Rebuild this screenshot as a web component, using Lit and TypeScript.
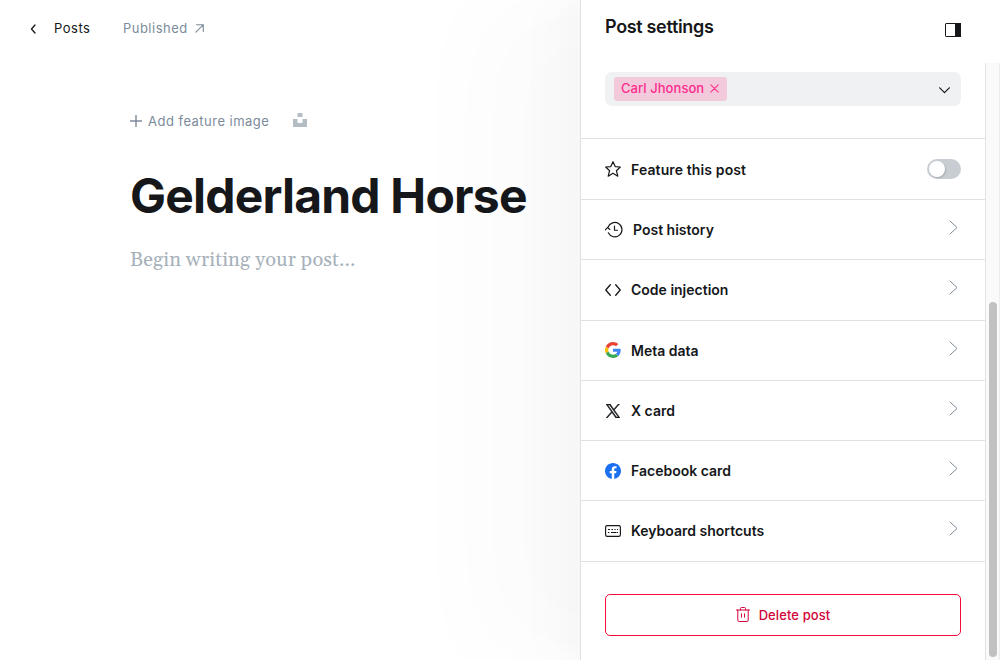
import { LitElement, html, css, svg } from "lit";
import { customElement, property } from "lit/decorators.js";

const stroke = (body: unknown, w = 16, h = 16, vb = "0 0 24 24", sw = 1.5) => html`
  <svg width=${w} height=${h} viewBox=${vb} fill="none" stroke="currentColor" stroke-width=${sw}
    stroke-linecap="round" stroke-linejoin="round">${body}</svg>`;

const icons: Record<string, () => unknown> = {
  star: () => stroke(svg`<path d="M8 .7l2.200 4.900 5.100.4-3.900 3.700 1.400 5.500L8 12.300l-4.800 2.900 1.400-5.500L.7 6l5.100-.4z"/>`, 18, 18, "-1 -1 18 18", 1.2),
  history: () => stroke(svg`<path d="M4 6.300A7.200 7.200 0 1 1 4.300 11.800M1.400 8.900l2-2.400 2.500 2M10.500 5v4.200h3"/>`, 20, 18, "0 0 20 18", 1.15),
  code: () => stroke(svg`<path d="M5.300 2.800L.8 8l4.500 5.200M10.700 2.800L15.200 8l-4.500 5.200"/>`, 16, 16, "0 0 16 16", 1.3),
  google: () => html`<svg width="16" height="16" viewBox="0 0 48 48">
    <path fill="#EA4335" d="M24 9.500c3.540 0 6.710 1.220 9.210 3.600l6.850-6.850C35.900 2.380 30.470 0 24 0 14.620 0 6.510 5.380 2.560 13.220l7.980 6.190C12.430 13.720 17.740 9.500 24 9.500z"/>
    <path fill="#4285F4" d="M46.980 24.550c0-1.570-.15-3.090-.38-4.550H24v9.020h12.940c-.58 2.960-2.260 5.480-4.780 7.180l7.730 6c4.510-4.180 7.090-10.360 7.090-17.650z"/>
    <path fill="#FBBC05" d="M10.530 28.590c-.48-1.450-.76-2.990-.76-4.590s.27-3.140.76-4.590l-7.980-6.190C.92 16.460 0 20.120 0 24c0 3.880.92 7.540 2.560 10.780l7.970-6.190z"/>
    <path fill="#34A853" d="M24 48c6.480 0 11.930-2.130 15.890-5.810l-7.730-6c-2.150 1.450-4.920 2.300-8.160 2.300-6.260 0-11.570-4.220-13.470-9.910l-7.980 6.190C6.510 42.620 14.620 48 24 48z"/>
  </svg>`,
  x: () => html`<svg width="14" height="14" viewBox="0 0 1200 1227" preserveAspectRatio="none"><path fill="#15171a" stroke="#15171a" stroke-width="50"
    d="M714.163 519.284L1160.890 0H1055.030L667.137 450.887L357.328 0H0L468.492 681.821L0 1226.370H105.866L515.491 750.218L842.672 1226.370H1200L714.137 519.284H714.163ZM569.165 687.828L521.697 619.934L144.011 79.694H306.615L611.412 515.685L658.880 583.579L1055.080 1150.300H892.476L569.165 687.854V687.828Z"/></svg>`,
  facebook: () => html`<svg width="16" height="16" viewBox="0 0 24 24"><path fill="#1b6ff0"
    d="M24 12.073c0-6.627-5.373-12-12-12s-12 5.373-12 12c0 5.990 4.388 10.954 10.125 11.854v-8.385H7.078v-3.470h3.047V9.430c0-3.007 1.792-4.669 4.533-4.669 1.312 0 2.686.235 2.686.235v2.953H15.830c-1.491 0-1.956.925-1.956 1.874v2.250h3.328l-.532 3.470h-2.796v8.385C19.612 23.027 24 18.062 24 12.073z"/></svg>`,
  keyboard: () => html`<svg width="16" height="16" viewBox="0 0 16 16" fill="none" stroke="#15171a">
    <rect x=".6" y="2.600" width="14.800" height="10.800" rx="1.600" stroke-width="1.150"/>
    <path d="M3 6.500h2M6.500 6.500h1.500M9.500 6.500h1.200M12 6.500h1M3 9.500h1.300M6 9.500h5.500M12 9.500h1" stroke-width="1"/></svg>`,
};

@customElement("settings-row")
export class SettingsRow extends LitElement {
  @property() label = "";
  @property() icon = "";
  @property({ type: Boolean, reflect: true }) toggle = false;

  static styles = css`
    :host { display: flex; align-items: center; box-sizing: border-box; height: 60px; padding: 1px 24px 0; border-top: 1px solid #dfe1e3; }
    :host([toggle]) { height: 61px; }
    .icon { display: flex; align-items: center; justify-content: center; width: 16px; height: 16px; margin-right: 10px; flex: none; }
    .icon.history { width: 18px; }
    .icon.star, .icon.google { margin-bottom: 2px; }
    .label { flex: 1; font-size: 14px; font-weight: 600; line-height: 20px; }
    :host([toggle]) .label { letter-spacing: .12px; }
    .chevron { display: flex; margin: 0 3px 5px 0; color: #7c8b9a; }
    .switch { box-sizing: border-box; width: 34px; height: 20px; padding: 2px; border-radius: 10px; background: #c8cdd4; margin-bottom: 1px; }
    .knob { width: 16px; height: 16px; border-radius: 50%; background: #fff; box-shadow: 1px 1px 2px rgba(0, 0, 0, .16); }
    svg { display: block; flex: none; }
  `;

  render() {
    return html`
      <span class="icon ${this.icon}">${icons[this.icon]?.()}</span>
      <span class="label">${this.label}</span>
      ${this.toggle
        ? html`<span class="switch"><div class="knob"></div></span>`
        : html`<span class="chevron">${stroke(svg`<path d="M1 1l7 6.500-7 6.500"/>`, 9, 15, "0 0 9 15", 1)}</span>`}
    `;
  }
}

@customElement("app-root")
export class AppRoot extends LitElement {
  static styles = css`
    :host { display: flex; width: 1000px; height: 660px; overflow: hidden; background: #fff; color: #15171a;
      font-family: Inter, "Liberation Sans", sans-serif; font-size: 14px; }
    svg { display: block; flex: none; }
    .editor { width: 580px; flex: none; }
    .bar { display: flex; align-items: center; height: 56px; padding-left: 29px; font-size: 13px; letter-spacing: .5px; }
    .bar svg { margin-top: 1px; }
    .back { display: flex; align-items: center; gap: 17px; color: #15171a; }
    .status { display: flex; align-items: center; gap: 7px; margin-left: 32.5px; color: #7c8b9a; }
    .canvas { padding: 54px 0 0 130px; }
    .feature { display: flex; align-items: center; height: 22px; color: #7c8b9a; font-size: 13px; letter-spacing: .48px; }
    .add { display: flex; align-items: center; gap: 6px; }
    .unsplash { margin: -3px 0 0 24px; }
    h1 { margin: 34px 0 0; font-size: 48px; line-height: 60px; font-weight: 700; letter-spacing: -.8px; white-space: nowrap; }
    .placeholder { margin: 18px 0 0; color: #a6b1ba; font: 20px/32px Georgia, Gelasio, "Source Serif Pro", "Noto Serif", "Liberation Serif", serif; letter-spacing: .1px; white-space: nowrap; }
    .panel { position: relative; box-sizing: border-box; display: flex; flex-direction: column; width: 420px; height: 660px;
      background: #fff; border-left: 1px solid #dfe1e3;
      box-shadow: -2.8px 0 2.2px rgba(0, 0, 0, .003), -6.7px 0 5.3px rgba(0, 0, 0, .004), -12.5px 0 10px rgba(0, 0, 0, .006),
        -22.3px 0 17.9px rgba(0, 0, 0, .008), -41.8px 0 33.4px rgba(0, 0, 0, .01), -100px 0 100px rgba(0, 0, 0, .02); }
    .head { display: flex; flex: none; box-sizing: border-box; justify-content: space-between; height: 63px; padding: 15px 39px 0 24px; }
    .head h2 { margin: 0; font-size: 18px; line-height: 24px; font-weight: 600; letter-spacing: -.33px; }
    .head svg { margin-top: 8px; }
    .body { display: flex; flex: 1; min-height: 0; }
    .scroll { flex: 1; display: flex; flex-direction: column; min-height: 0; overflow: hidden; }
    .select { display: flex; flex: none; box-sizing: border-box; align-items: center; justify-content: space-between; height: 34px; margin: 9px 24px 32px;
      padding: 0 11px 0 9px; border-radius: 7px; background: #eff1f3; }
    .tag { display: flex; box-sizing: border-box; align-items: center; gap: 6px; height: 24px; margin-bottom: 1px; padding: 0 7.500px 1px 7px; border-radius: 3px;
      background: #f3cadc; color: #fb2d8d; font-size: 13px; font-weight: 500; letter-spacing: .06px; }
    .tag svg { margin-top: 1px; }
    .caret { margin-top: 3px; }
    .rows { display: grid; flex: none; grid-template-rows: 61px 60px 61px 60px 60px 60px 61px; border-bottom: 1px solid #dfe1e3; }
    .delete { display: flex; flex: none; box-sizing: border-box; align-items: center; justify-content: center; gap: 9px; height: 42px; margin: 32px 24px 0;
      border: 1px solid #f50b3c; border-radius: 5px; background: #fff; color: #d1053a; font: 500 13px/20px Inter, sans-serif; letter-spacing: .1px; }
    .delete svg { margin-bottom: 2px; }
    .track { box-sizing: border-box; width: 15px; padding: 239px 2px 3px 3px; background: #fafafa; border-left: 1px solid #e3e3e3; border-right: 1px solid #ececec; }
    .thumb { width: 8px; height: 355px; border-radius: 4px; background: #c1c1c1; }
  `;

  render() {
    return html`
      <main class="editor">
        <nav class="bar">
          <span class="back">${stroke(svg`<path d="M6 1L2.500 5 6 9"/>`, 8, 10, "0 0 8 10", 1.3)}Posts</span>
          <span class="status">Published ${stroke(svg`<path d="M.8 8.200L8.300.8M1.500.8h6.800v6.800"/>`, 9, 9, "0 0 9 9", 1.1)}</span>
        </nav>
        <section class="canvas">
          <div class="feature">
            <span class="add">${stroke(svg`<path d="M6 .5v11M.5 6h11"/>`, 12, 12, "0 0 12 12", 1.4)}Add feature image</span>
            <svg class="unsplash" width="14" height="14" viewBox="0 0 14 14" fill="#b3bdc3">
              <path d="M4.500 0h5v4h-5zM0 6h4.500v4h5V6H14v8H0z"/>
            </svg>
          </div>
          <h1>Gelderland Horse</h1>
          <p class="placeholder">Begin writing your post...</p>
        </section>
      </main>
      <aside class="panel">
        <header class="head">
          <h2>Post settings</h2>
          <svg width="16" height="14" viewBox="0 0 16 14"><rect x=".5" y=".5" width="15" height="13" rx=".6" fill="none" stroke="#15171a"/><path d="M10 0h6v14h-6z" fill="#15171a"/></svg>
        </header>
        <div class="body">
          <div class="scroll">
            <div class="select">
              <span class="tag">Carl Jhonson ${stroke(svg`<path d="M.8.800l7.400 7.400M8.200.8L.8 8.200"/>`, 9, 9, "0 0 9 9", 1.1)}</span>
              <span class="caret">${stroke(svg`<path d="M.7.8l4.800 4.900L10.300.8"/>`, 11, 7, "0 0 11 7", 1.2)}</span>
            </div>
            <div class="rows">
              <settings-row icon="star" label="Feature this post" toggle></settings-row>
              <settings-row icon="history" label="Post history"></settings-row>
              <settings-row icon="code" label="Code injection"></settings-row>
              <settings-row icon="google" label="Meta data"></settings-row>
              <settings-row icon="x" label="X card"></settings-row>
              <settings-row icon="facebook" label="Facebook card"></settings-row>
              <settings-row icon="keyboard" label="Keyboard shortcuts"></settings-row>
            </div>
            <button class="delete">
              ${stroke(svg`<path d="M.5 3h13M4.500 3V1.500a1 1 0 0 1 1-1h3a1 1 0 0 1 1 1V3M1.800 3v10.200a1.300 1.300 0 0 0 1.300 1.300h7.800a1.300 1.300 0 0 0 1.300-1.300V3M5.500 6.800v3.400M8.500 6.800v3.400"/>`, 14, 15, "0 0 14 15", 1)}
              Delete post
            </button>
          </div>
          <div class="track"><div class="thumb"></div></div>
        </div>
      </aside>
    `;
  }
}
